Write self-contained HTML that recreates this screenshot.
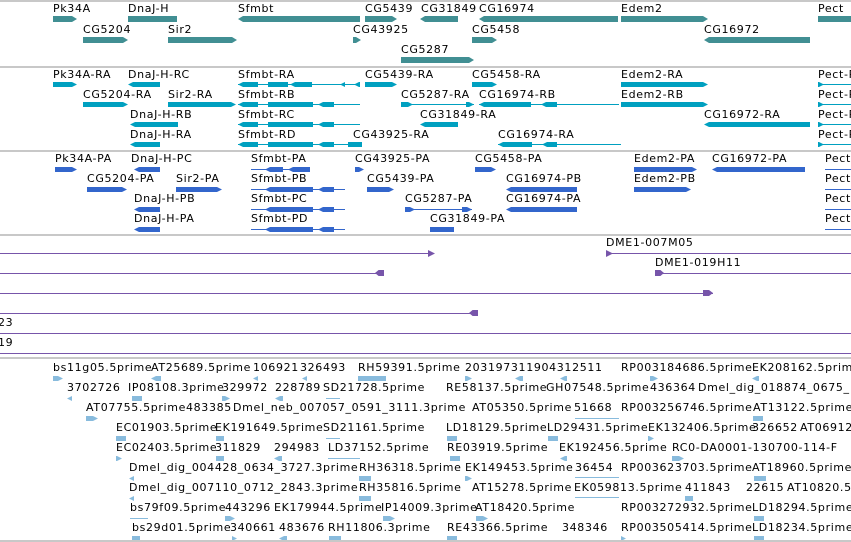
<!DOCTYPE html>
<html><head><meta charset="utf-8"><style>
*{margin:0;padding:0}
html,body{width:851px;height:542px;overflow:hidden;background:#fff;position:relative}
div{position:absolute}
.t{font:11px "DejaVu Sans","Liberation Sans",sans-serif;color:#000;white-space:nowrap;line-height:13px;letter-spacing:0.65px}
.hl{left:0;width:851px;height:2px;background:#c8c8c8}
.pl{left:0;width:851px;height:1px;background:#7755aa}
.g{height:6px;background:#418f93}
.r{height:5px;background:#00a0c0}
.p{height:5px;background:#3366cc}
.e{height:5px;background:#88bbdd}
.rl{height:1px;background:#00a0c0}
.plx{height:1px;background:#3366cc}
.R{clip-path:polygon(0 0,calc(100% - 5px) 0,100% 50%,calc(100% - 5px) 100%,0 100%)}
.L{clip-path:polygon(5px 0,100% 0,100% 100%,5px 100%,0 50%)}
</style></head><body>
<div class="hl" style="top:0"></div>
<div class="hl" style="top:66px"></div>
<div class="hl" style="top:150px"></div>
<div class="hl" style="top:234px"></div>

<!-- genes -->
<div class="t" style="left:53px;top:2px">Pk34A</div><div class="g R" style="left:53px;top:16px;width:24px"></div>
<div class="t" style="left:128px;top:2px">DnaJ-H</div><div class="g" style="left:128px;top:16px;width:49px"></div>
<div class="t" style="left:238px;top:2px">Sfmbt</div><div class="g L" style="left:238px;top:16px;width:122px"></div>
<div class="t" style="left:365px;top:2px">CG5439</div><div class="g R" style="left:365px;top:16px;width:32px"></div>
<div class="t" style="left:421px;top:2px">CG31849</div><div class="g L" style="left:420px;top:16px;width:38px"></div>
<div class="t" style="left:479px;top:2px">CG16974</div><div class="g L" style="left:479px;top:16px;width:139px"></div>
<div class="t" style="left:621px;top:2px">Edem2</div><div class="g R" style="left:621px;top:16px;width:87px"></div>
<div class="t" style="left:818px;top:2px">Pect</div><div class="g" style="left:818px;top:16px;width:40px"></div>
<div class="t" style="left:83px;top:23px">CG5204</div><div class="g R" style="left:83px;top:37px;width:45px"></div>
<div class="t" style="left:168px;top:23px">Sir2</div><div class="g R" style="left:168px;top:37px;width:69px"></div>
<div class="t" style="left:353px;top:23px">CG43925</div><div class="g R" style="left:353px;top:37px;width:8px"></div>
<div class="t" style="left:472px;top:23px">CG5458</div><div class="g R" style="left:472px;top:37px;width:25px"></div>
<div class="t" style="left:704px;top:23px">CG16972</div><div class="g L" style="left:704px;top:37px;width:106px"></div>
<div class="t" style="left:401px;top:43px">CG5287</div><div class="g R" style="left:401px;top:57px;width:73px"></div>

<!-- transcripts -->
<div class="t" style="left:53px;top:68px">Pk34A-RA</div><div class="r R" style="left:53px;top:82px;width:24px"></div>
<div class="t" style="left:128px;top:68px">DnaJ-H-RC</div><div class="r L" style="left:128px;top:82px;width:32px"></div>
<div class="t" style="left:238px;top:68px">Sfmbt-RA</div><div class="rl" style="left:238px;top:84px;width:122px"></div><div class="r L" style="left:238px;top:82px;width:20px"></div><div class="r" style="left:268px;top:82px;width:20px"></div><div class="r L" style="left:290px;top:82px;width:22px"></div><div class="r L" style="left:340px;top:82px;width:5px"></div><div class="r L" style="left:354px;top:82px;width:6px"></div>
<div class="t" style="left:365px;top:68px">CG5439-RA</div><div class="r R" style="left:365px;top:82px;width:32px"></div>
<div class="t" style="left:472px;top:68px">CG5458-RA</div><div class="r R" style="left:472px;top:82px;width:25px"></div>
<div class="t" style="left:621px;top:68px">Edem2-RA</div><div class="r R" style="left:621px;top:82px;width:87px"></div>
<div class="t" style="left:818px;top:68px">Pect-RA</div><div class="rl" style="left:818px;top:84px;width:40px"></div><div class="r R" style="left:818px;top:82px;width:6px"></div>

<div class="t" style="left:83px;top:88px">CG5204-RA</div><div class="r R" style="left:83px;top:102px;width:45px"></div>
<div class="t" style="left:168px;top:88px">Sir2-RA</div><div class="r R" style="left:168px;top:102px;width:68px"></div>
<div class="t" style="left:238px;top:88px">Sfmbt-RB</div><div class="rl" style="left:238px;top:104px;width:122px"></div><div class="r L" style="left:238px;top:102px;width:20px"></div><div class="r" style="left:268px;top:102px;width:45px"></div><div class="r L" style="left:318px;top:102px;width:16px"></div>
<div class="t" style="left:401px;top:88px">CG5287-RA</div><div class="rl" style="left:401px;top:104px;width:73px"></div><div class="r R" style="left:401px;top:102px;width:12px"></div><div class="r R" style="left:466px;top:102px;width:8px"></div>
<div class="t" style="left:479px;top:88px">CG16974-RB</div><div class="rl" style="left:479px;top:104px;width:140px"></div><div class="r L" style="left:479px;top:102px;width:52px"></div><div class="r L" style="left:541px;top:102px;width:16px"></div>
<div class="t" style="left:621px;top:88px">Edem2-RB</div><div class="r R" style="left:621px;top:102px;width:87px"></div>
<div class="t" style="left:818px;top:88px">Pect-RB</div><div class="rl" style="left:818px;top:104px;width:40px"></div><div class="r R" style="left:818px;top:102px;width:6px"></div>

<div class="t" style="left:130px;top:108px">DnaJ-H-RB</div><div class="r L" style="left:130px;top:122px;width:48px"></div>
<div class="t" style="left:238px;top:108px">Sfmbt-RC</div><div class="rl" style="left:238px;top:124px;width:122px"></div><div class="r L" style="left:238px;top:122px;width:20px"></div><div class="r" style="left:268px;top:122px;width:45px"></div><div class="r L" style="left:318px;top:122px;width:16px"></div>
<div class="t" style="left:420px;top:108px">CG31849-RA</div><div class="r L" style="left:420px;top:122px;width:38px"></div>
<div class="t" style="left:704px;top:108px">CG16972-RA</div><div class="r L" style="left:704px;top:122px;width:106px"></div>
<div class="t" style="left:818px;top:108px">Pect-RC</div><div class="rl" style="left:818px;top:124px;width:40px"></div><div class="r R" style="left:818px;top:122px;width:6px"></div>

<div class="t" style="left:130px;top:128px">DnaJ-H-RA</div><div class="r L" style="left:130px;top:142px;width:30px"></div>
<div class="t" style="left:238px;top:128px">Sfmbt-RD</div><div class="rl" style="left:238px;top:144px;width:124px"></div><div class="r L" style="left:238px;top:142px;width:20px"></div><div class="r" style="left:268px;top:142px;width:45px"></div><div class="r L" style="left:318px;top:142px;width:16px"></div><div class="r" style="left:348px;top:142px;width:14px"></div>
<div class="t" style="left:353px;top:128px">CG43925-RA</div>
<div class="t" style="left:498px;top:128px">CG16974-RA</div><div class="rl" style="left:498px;top:144px;width:123px"></div><div class="r L" style="left:498px;top:142px;width:34px"></div><div class="r L" style="left:542px;top:142px;width:15px"></div>
<div class="t" style="left:818px;top:128px">Pect-RD</div><div class="rl" style="left:818px;top:144px;width:40px"></div><div class="r R" style="left:818px;top:142px;width:6px"></div>

<!-- proteins -->
<div class="t" style="left:55px;top:152px">Pk34A-PA</div><div class="p R" style="left:55px;top:167px;width:22px"></div>
<div class="t" style="left:131px;top:152px">DnaJ-H-PC</div><div class="p L" style="left:134px;top:167px;width:26px"></div>
<div class="t" style="left:251px;top:152px">Sfmbt-PA</div><div class="plx" style="left:251px;top:169px;width:59px"></div><div class="p L" style="left:288px;top:167px;width:22px"></div><div class="p L" style="left:265px;top:167px;width:18px"></div>
<div class="t" style="left:355px;top:152px">CG43925-PA</div><div class="p R" style="left:355px;top:167px;width:9px"></div>
<div class="t" style="left:475px;top:152px">CG5458-PA</div><div class="p R" style="left:475px;top:167px;width:21px"></div>
<div class="t" style="left:634px;top:152px">Edem2-PA</div><div class="p R" style="left:634px;top:167px;width:63px"></div>
<div class="t" style="left:712px;top:152px">CG16972-PA</div><div class="p L" style="left:712px;top:167px;width:93px"></div>
<div class="t" style="left:825px;top:152px">Pect-PA</div><div class="plx" style="left:825px;top:169px;width:30px"></div>

<div class="t" style="left:87px;top:172px">CG5204-PA</div><div class="p R" style="left:87px;top:187px;width:40px"></div>
<div class="t" style="left:176px;top:172px">Sir2-PA</div><div class="p R" style="left:176px;top:187px;width:46px"></div>
<div class="t" style="left:251px;top:172px">Sfmbt-PB</div><div class="plx" style="left:251px;top:189px;width:94px"></div><div class="p L" style="left:265px;top:187px;width:48px"></div><div class="p L" style="left:318px;top:187px;width:16px"></div>
<div class="t" style="left:367px;top:172px">CG5439-PA</div><div class="p R" style="left:367px;top:187px;width:27px"></div>
<div class="t" style="left:506px;top:172px">CG16974-PB</div><div class="p L" style="left:506px;top:187px;width:71px"></div>
<div class="t" style="left:634px;top:172px">Edem2-PB</div><div class="p R" style="left:634px;top:187px;width:57px"></div>
<div class="t" style="left:825px;top:172px">Pect-PB</div><div class="plx" style="left:825px;top:189px;width:30px"></div>

<div class="t" style="left:134px;top:192px">DnaJ-H-PB</div><div class="p L" style="left:134px;top:207px;width:26px"></div>
<div class="t" style="left:251px;top:192px">Sfmbt-PC</div><div class="plx" style="left:251px;top:209px;width:94px"></div><div class="p L" style="left:265px;top:207px;width:48px"></div><div class="p L" style="left:318px;top:207px;width:16px"></div>
<div class="t" style="left:405px;top:192px">CG5287-PA</div><div class="plx" style="left:405px;top:209px;width:67px"></div><div class="p R" style="left:462px;top:207px;width:10px"></div><div class="p R" style="left:405px;top:207px;width:10px"></div>
<div class="t" style="left:506px;top:192px">CG16974-PA</div><div class="p L" style="left:506px;top:207px;width:71px"></div>
<div class="t" style="left:825px;top:192px">Pect-PC</div><div class="plx" style="left:825px;top:209px;width:30px"></div>

<div class="t" style="left:134px;top:212px">DnaJ-H-PA</div><div class="p L" style="left:134px;top:227px;width:26px"></div>
<div class="t" style="left:251px;top:212px">Sfmbt-PD</div><div class="plx" style="left:251px;top:229px;width:94px"></div><div class="p L" style="left:265px;top:227px;width:48px"></div><div class="p L" style="left:318px;top:227px;width:16px"></div>
<div class="t" style="left:430px;top:212px">CG31849-PA</div><div class="p" style="left:430px;top:227px;width:24px"></div>
<div class="t" style="left:825px;top:212px">Pect-PD</div><div class="plx" style="left:825px;top:229px;width:30px"></div>

<!-- clones -->
<div class="pl" style="top:253px;width:433px"></div><div style="left:428px;top:250px;width:7px;height:7px;background:#7755aa;clip-path:polygon(0 0,100% 50%,0 100%)"></div>
<div class="t" style="left:606px;top:236px">DME1-007M05</div><div class="pl" style="left:606px;top:253px;width:245px"></div><div style="left:606px;top:250px;width:7px;height:7px;background:#7755aa;clip-path:polygon(0 0,100% 50%,0 100%)"></div>
<div class="pl" style="top:273px;width:383px"></div><div style="left:375px;top:270px;width:9px;height:6px;background:#7755aa;clip-path:polygon(0 50%,40% 0,100% 0,100% 100%,40% 100%)"></div>
<div class="t" style="left:655px;top:256px">DME1-019H11</div><div class="pl" style="left:655px;top:273px;width:196px"></div><div style="left:655px;top:270px;width:9px;height:6px;background:#7755aa;clip-path:polygon(0 0,60% 0,100% 50%,60% 100%,0 100%)"></div>
<div class="pl" style="top:293px;width:713px"></div><div style="left:703px;top:290px;width:10px;height:6px;background:#7755aa;clip-path:polygon(0 0,60% 0,100% 50%,60% 100%,0 100%)"></div>
<div class="t" style="left:-2px;top:316px">23</div>
<div class="pl" style="top:313px;width:478px"></div><div style="left:469px;top:310px;width:9px;height:6px;background:#7755aa;clip-path:polygon(0 50%,40% 0,100% 0,100% 100%,40% 100%)"></div>
<div class="t" style="left:-2px;top:336px">19</div>
<div class="pl" style="top:333px"></div>
<div class="pl" style="top:353px"></div>
<div class="hl" style="top:357px"></div>

<!-- ESTs -->
<div class="t" style="left:53px;top:361px">bs11g05.5prime</div><div class="e R" style="left:53px;top:376px;width:10px"></div>
<div class="t" style="left:151px;top:361px">AT25689.5prime</div><div class="e L" style="left:151px;top:376px;width:10px"></div>
<div class="t" style="left:253px;top:361px">106921</div><div class="e L" style="left:253px;top:376px;width:5px"></div>
<div class="t" style="left:300px;top:361px">326493</div><div class="e L" style="left:302px;top:376px;width:5px"></div>
<div class="t" style="left:358px;top:361px">RH59391.5prime</div><div class="e" style="left:358px;top:376px;width:28px"></div>
<div class="t" style="left:465px;top:361px">203197311904312511</div><div class="e R" style="left:465px;top:376px;width:7px"></div><div class="e L" style="left:515px;top:376px;width:8px"></div><div class="e L" style="left:560px;top:376px;width:7px"></div>
<div class="t" style="left:621px;top:361px">RP003184686.5prime</div><div class="e R" style="left:650px;top:376px;width:8px"></div>
<div class="t" style="left:752px;top:361px">EK208162.5prime</div><div class="e L" style="left:752px;top:376px;width:7px"></div>

<div class="t" style="left:67px;top:381px">3702726</div><div class="e L" style="left:67px;top:396px;width:5px"></div>
<div class="t" style="left:128px;top:381px">IP08108.3prime</div><div class="e" style="left:132px;top:396px;width:10px"></div>
<div class="t" style="left:222px;top:381px">329972</div><div class="e R" style="left:222px;top:396px;width:8px"></div>
<div class="t" style="left:275px;top:381px">228789</div><div class="e L" style="left:275px;top:396px;width:8px"></div>
<div class="t" style="left:323px;top:381px">SD21728.5prime</div><div class="e" style="left:326px;top:398px;width:14px;height:1px"></div>
<div class="t" style="left:446px;top:381px">RE58137.5prime</div>
<div class="t" style="left:546px;top:381px">GH07548.5prime</div>
<div class="t" style="left:650px;top:381px">436364</div>
<div class="t" style="left:698px;top:381px">Dmel_dig_018874_0675_</div>

<div class="t" style="left:86px;top:401px">AT07755.5prime</div><div class="e R" style="left:86px;top:416px;width:12px"></div>
<div class="t" style="left:186px;top:401px">483385</div>
<div class="t" style="left:233px;top:401px">Dmel_neb_007057_0591_3111.3prime</div>
<div class="t" style="left:472px;top:401px">AT05350.5prime</div>
<div class="t" style="left:574px;top:401px">51668</div><div class="e" style="left:575px;top:418px;width:44px;height:1px"></div>
<div class="t" style="left:621px;top:401px">RP003256746.5prime</div>
<div class="t" style="left:753px;top:401px">AT13122.5prime</div><div class="e" style="left:753px;top:416px;width:10px"></div>

<div class="t" style="left:116px;top:421px">EC01903.5prime</div><div class="e" style="left:116px;top:436px;width:10px"></div>
<div class="t" style="left:215px;top:421px">EK191649.5prime</div><div class="e" style="left:216px;top:436px;width:8px"></div>
<div class="t" style="left:323px;top:421px">SD21161.5prime</div><div class="e" style="left:326px;top:438px;width:14px;height:1px"></div>
<div class="t" style="left:446px;top:421px">LD18129.5prime</div><div class="e" style="left:447px;top:436px;width:10px"></div>
<div class="t" style="left:547px;top:421px">LD29431.5prime</div><div class="e" style="left:548px;top:436px;width:10px"></div>
<div class="t" style="left:648px;top:421px">EK132406.5prime</div><div class="e R" style="left:648px;top:436px;width:6px"></div>
<div class="t" style="left:752px;top:421px">326652</div>
<div class="t" style="left:800px;top:421px">AT06912</div>

<div class="t" style="left:116px;top:441px">EC02403.5prime</div><div class="e R" style="left:116px;top:456px;width:6px"></div>
<div class="t" style="left:215px;top:441px">311829</div><div class="e" style="left:216px;top:456px;width:8px"></div>
<div class="t" style="left:274px;top:441px">294983</div><div class="e L" style="left:274px;top:456px;width:8px"></div>
<div class="t" style="left:328px;top:441px">LD37152.5prime</div><div class="e" style="left:328px;top:458px;width:32px;height:1px"></div>
<div class="t" style="left:447px;top:441px">RE03919.5prime</div><div class="e" style="left:450px;top:456px;width:10px"></div>
<div class="t" style="left:559px;top:441px">EK192456.5prime</div><div class="e L" style="left:560px;top:456px;width:7px"></div>
<div class="t" style="left:672px;top:441px">RC0-DA0001-130700-114-F</div><div class="e R" style="left:672px;top:456px;width:12px"></div>

<div class="t" style="left:129px;top:461px">Dmel_dig_004428_0634_3727.3prime</div><div class="e L" style="left:129px;top:476px;width:5px"></div>
<div class="t" style="left:359px;top:461px">RH36318.5prime</div><div class="e" style="left:359px;top:476px;width:12px"></div>
<div class="t" style="left:465px;top:461px">EK149453.5prime</div><div class="e R" style="left:465px;top:476px;width:7px"></div>
<div class="t" style="left:575px;top:461px">36454</div><div class="e" style="left:575px;top:477px;width:44px;height:1px"></div>
<div class="t" style="left:621px;top:461px">RP003623703.5prime</div>
<div class="t" style="left:752px;top:461px">AT18960.5prime</div><div class="e" style="left:754px;top:476px;width:12px"></div>

<div class="t" style="left:129px;top:481px">Dmel_dig_007110_0712_2843.3prime</div><div class="e L" style="left:129px;top:496px;width:5px"></div>
<div class="t" style="left:359px;top:481px">RH35816.5prime</div><div class="e" style="left:359px;top:496px;width:12px"></div>
<div class="t" style="left:472px;top:481px">AT15278.5prime</div>
<div class="t" style="left:574px;top:481px">EK059813.5prime</div><div class="e" style="left:575px;top:497px;width:44px;height:1px"></div>
<div class="t" style="left:685px;top:481px">411843</div><div class="e" style="left:685px;top:496px;width:8px"></div>
<div class="t" style="left:746px;top:481px">22615</div>
<div class="t" style="left:787px;top:481px">AT10820.5</div>

<div class="t" style="left:130px;top:501px">bs79f09.5prime</div><div class="e" style="left:130px;top:518px;width:18px;height:1px"></div>
<div class="t" style="left:225px;top:501px">443296</div><div class="e R" style="left:225px;top:516px;width:10px"></div>
<div class="t" style="left:274px;top:501px">EK179944.5prime</div>
<div class="t" style="left:381px;top:501px">IP14009.3prime</div><div class="e R" style="left:383px;top:516px;width:12px"></div>
<div class="t" style="left:475px;top:501px">AT18420.5prime</div><div class="e R" style="left:476px;top:516px;width:12px"></div>
<div class="t" style="left:621px;top:501px">RP003272932.5prime</div>
<div class="t" style="left:752px;top:501px">LD18294.5prime</div><div class="e" style="left:754px;top:516px;width:10px"></div>

<div class="t" style="left:132px;top:521px">bs29d01.5prime</div><div class="e" style="left:132px;top:536px;width:8px"></div>
<div class="t" style="left:230px;top:521px">340661</div><div class="e R" style="left:232px;top:536px;width:5px"></div>
<div class="t" style="left:279px;top:521px">483676</div><div class="e L" style="left:279px;top:536px;width:8px"></div>
<div class="t" style="left:328px;top:521px">RH11806.3prime</div><div class="e" style="left:329px;top:536px;width:12px"></div>
<div class="t" style="left:447px;top:521px">RE43366.5prime</div><div class="e" style="left:447px;top:536px;width:10px"></div>
<div class="t" style="left:562px;top:521px">348346</div>
<div class="t" style="left:621px;top:521px">RP003505414.5prime</div><div class="e R" style="left:621px;top:536px;width:5px"></div>
<div class="t" style="left:752px;top:521px">LD18234.5prime</div><div class="e" style="left:754px;top:536px;width:10px"></div>
<div class="hl" style="top:540px"></div>
</body></html>
